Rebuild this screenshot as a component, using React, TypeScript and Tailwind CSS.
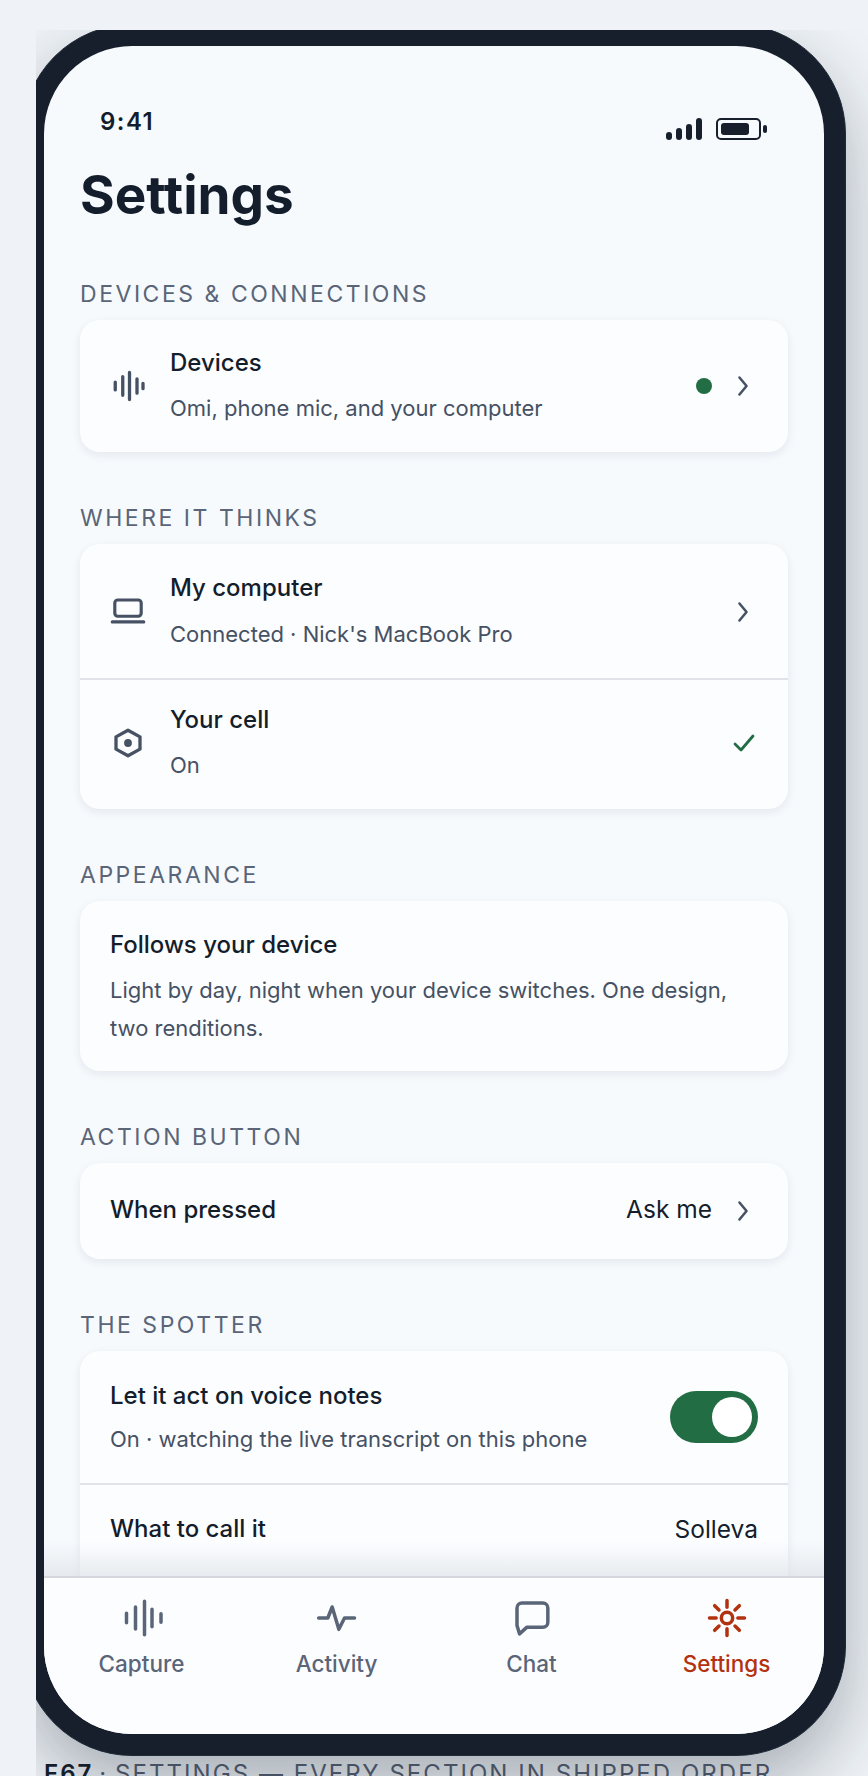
import React from 'react';

const Wave = ({ className }: { className: string }) => (
  <svg viewBox="0 0 24 24" fill="none" stroke="currentColor" strokeWidth="2.2" strokeLinecap="round" className={className}>
    <path d="M3.5 9.4v5.2M8.5 5.8v12.4M13 3v18M18 7.2v9.6M22 10.2v3.6" />
  </svg>
);

const Chevron = () => (
  <svg viewBox="0 0 24 24" fill="none" stroke="#465163" strokeWidth="1.8" strokeLinecap="round" strokeLinejoin="round" className="w-[34px] h-[34px] -mr-[2px] shrink-0">
    <path d="M9.5 6l5 6-5 6" />
  </svg>
);

const Label = ({ children, first }: { children: React.ReactNode; first?: boolean }) => (
  <div className={`${first ? 'mt-[54px]' : 'mt-[53px]'} mb-[13px] text-[23px] leading-[26px] tracking-[0.11em] uppercase text-[#5a6578]`}>
    {children}
  </div>
);

const Card = ({ children }: { children: React.ReactNode }) => (
  <div className="bg-[#fcfdff] rounded-[20px] shadow-[0_3px_10px_rgba(20,30,45,0.08)] overflow-hidden">{children}</div>
);

const IconRow = ({ icon, title, sub, right, tall, short }: { icon: React.ReactNode; title: string; sub: string; right: React.ReactNode; tall?: boolean; short?: boolean }) => (
  <div className={`flex items-center pl-[30px] pr-[30px] ${tall ? 'h-[135px]' : short ? 'h-[129px]' : 'h-[132px]'}`}>
    <div className="w-[36px] h-[36px] mr-[24px] shrink-0 text-[#465163]">{icon}</div>
    <div className={`flex-1 min-w-0 ${short ? 'pb-[5px]' : 'pb-[2px]'}`}>
      <div className="text-[24px] leading-[32px] font-medium text-[#141d2b]">{title}</div>
      <div className={`${tall ? 'mt-[15px]' : 'mt-[14px]'} text-[22px] leading-[30px] text-[#465163]`}>{sub}</div>
    </div>
    {right}
  </div>
);

const tabs = [
  {
    name: 'Capture',
    active: false,
    icon: <path d="M2.7 9.2v5.6M8.1 5.4v13.2M13.5 2v20M18 6.7v10.6M23.4 9.5v5" />,
  },
  { name: 'Activity', active: false, icon: <path d="M1 12h5.5l2.6-6.6 4 13.4 3.4-6.8h6" /> },
  { name: 'Chat', active: false, icon: <path d="M3 6a3 3 0 0 1 3-3h12.5a3 3 0 0 1 3 3v8.5a3 3 0 0 1-3 3H9l-4.5 4-1.5-5z" /> },
  {
    name: 'Settings',
    active: true,
    icon: (
      <>
        <circle cx="12" cy="12" r="3.4" />
        <path d="M12 1.5v4M12 18.5v4M1.5 12h4M18.5 12h4M4.6 4.6l2.6 2.6M16.8 16.8l2.6 2.6M4.6 19.4l2.6-2.6M16.8 7.2l2.6-2.6" />
      </>
    ),
  },
];

export default function App() {
  return (
    <div className="h-[1776px] overflow-hidden bg-[#eff3f7] pt-[30px] pl-[36px] font-['Inter',sans-serif]">
      <div className="w-[832px] h-[1746px] overflow-hidden">
        <div className="-mt-[6px] -ml-[14px] w-[824px] h-[1732px] p-[22px] rounded-[110px] bg-[#161f2b] border border-[#1f2b3a] shadow-[0_30px_70px_rgba(20,30,45,0.32)]">
          <div className="relative w-[780px] h-[1688px] -m-px rounded-[88px] overflow-hidden bg-[#f6fafd] flex flex-col">
            <div className="flex-1 min-h-0 overflow-hidden px-[36px]">
              <div className="flex justify-between items-start pt-[61px] pl-[20px] pr-[21px]">
                <div className="text-[24px] leading-[30px] font-semibold tracking-[0.06em] text-[#141d2b]">9:41</div>
                <div className="flex items-end gap-[14px] mt-[11px]">
                  <div className="flex items-end gap-[4px] h-[22px]">
                    <div className="w-[6px] h-[8px] rounded-full bg-[#161f2b]" />
                    <div className="w-[6px] h-[12px] rounded-full bg-[#161f2b]" />
                    <div className="w-[6px] h-[16px] rounded-full bg-[#161f2b]" />
                    <div className="w-[6px] h-[22px] rounded-full bg-[#161f2b]" />
                  </div>
                  <div className="flex items-center gap-[2px]">
                    <div className="w-[45px] h-[22px] rounded-[5px] border-2 border-[#161f2b] p-[3px] pr-[10px]">
                      <div className="w-full h-full rounded-[3px] bg-[#161f2b]" />
                    </div>
                    <div className="w-[4px] h-[8px] rounded-full bg-[#161f2b]" />
                  </div>
                </div>
              </div>
              <h1 className="mt-[23px] text-[53px] leading-[64px] font-bold text-[#141d2b]">Settings</h1>

              <Label first>Devices &amp; connections</Label>
              <Card>
                <IconRow
                  icon={<Wave className="w-[36px] h-[36px]" />}
                  title="Devices"
                  sub="Omi, phone mic, and your computer"
                  right={
                    <>
                      <div className="w-[16px] h-[16px] rounded-full bg-[#226d44] mr-[14px]" />
                      <Chevron />
                    </>
                  }
                />
              </Card>

              <Label>Where it thinks</Label>
              <Card>
                <IconRow
                  tall
                  icon={
                    <svg viewBox="0 0 24 24" fill="none" stroke="currentColor" strokeWidth="2.1" strokeLinecap="round" strokeLinejoin="round" className="w-[36px] h-[36px]">
                      <rect x="3.2" y="4" width="17.6" height="10.8" rx="2" />
                      <path d="M1.5 18.6h21" />
                    </svg>
                  }
                  title="My computer"
                  sub="Connected · Nick's MacBook Pro"
                  right={<Chevron />}
                />
                <div className="h-[2px] bg-[#e0e3ea] -mt-px" />
                <IconRow
                  short
                  icon={
                    <svg viewBox="0 0 24 24" fill="none" stroke="currentColor" strokeWidth="2.2" strokeLinejoin="round" className="w-[36px] h-[36px] -mt-[2px]">
                      <path d="M12 3.5l8 4.4v8.2l-8 4.4-8-4.4V7.9z" />
                      <circle cx="12" cy="12" r="2.6" fill="currentColor" stroke="none" />
                    </svg>
                  }
                  title="Your cell"
                  sub="On"
                  right={
                    <svg viewBox="0 0 24 24" fill="none" stroke="#226d44" strokeWidth="2.8" strokeLinecap="round" strokeLinejoin="round" className="w-[24px] h-[24px] mr-[2px] -mt-[4px] shrink-0">
                      <path d="M3 13l6 6L21 5" />
                    </svg>
                  }
                />
              </Card>

              <Label>Appearance</Label>
              <Card>
                <div className="px-[30px] pt-[28px] pb-[24px]">
                  <div className="text-[24px] leading-[32px] font-medium text-[#141d2b]">Follows your device</div>
                  <div className="mt-[10px] text-[22px] leading-[38px] text-[#465163]">
                    Light by day, night when your device switches. One design, two renditions.
                  </div>
                </div>
              </Card>

              <Label>Action button</Label>
              <Card>
                <div className="flex items-center pl-[30px] pr-[30px] h-[96px]">
                  <div className="flex-1 text-[24px] font-medium text-[#141d2b] -mt-[3px]">When pressed</div>
                  <div className="text-[24.5px] text-[#141d2b] mr-[14px] -mt-[3px]">Ask me</div>
                  <Chevron />
                </div>
              </Card>

              <Label>The spotter</Label>
              <Card>
                <div className="flex items-center pl-[30px] pr-[30px] h-[132px]">
                  <div className="flex-1 min-w-0">
                    <div className="text-[24px] leading-[32px] font-medium text-[#141d2b]">Let it act on voice notes</div>
                    <div className="mt-[12px] text-[22px] leading-[30px] text-[#465163]">On · watching the live transcript on this phone</div>
                  </div>
                  <div className="w-[88px] h-[52px] rounded-full bg-[#226d44] p-[6px] flex justify-end">
                    <div className="w-[40px] h-[40px] rounded-full bg-white" />
                  </div>
                </div>
                <div className="h-[2px] bg-[#e0e3ea]" />
                <div className="flex items-start justify-between pl-[30px] pr-[30px] pt-[26px] h-[120px]">
                  <div className="text-[24px] font-medium text-[#141d2b]">What to call it</div>
                  <div className="text-[24.5px] text-[#141d2b]">Solleva</div>
                </div>
              </Card>
            </div>

            <div className="absolute left-0 right-0 bottom-[158px] h-[34px] bg-gradient-to-b from-transparent to-[#dfe3e8]/70" />

            <div className="relative shrink-0 h-[158px] border-t-2 border-[#d4d8de] bg-[#fcfdff] grid grid-cols-4 pt-[20px]">
              {tabs.map((tab) => (
                <div key={tab.name} className={`flex flex-col items-center ${tab.active ? 'text-[#b23210]' : 'text-[#5a6578]'}`}>
                  <svg viewBox="0 0 24 24" fill="none" stroke="currentColor" strokeWidth="2.1" strokeLinecap="round" strokeLinejoin="round" className="w-[40px] h-[40px] overflow-visible">
                    {tab.icon}
                  </svg>
                  <div className="mt-[11px] text-[22.5px] leading-[30px] font-medium">{tab.name}</div>
                </div>
              ))}
            </div>
          </div>
        </div>
        <div className="ml-[8px] mt-[3px] text-[24px] leading-[30px] tracking-[0.0855em] uppercase whitespace-nowrap text-[#465163]">
          <span className="font-semibold text-[#141d2b]">F67</span> <span className="-ml-[3px]">·</span> <span className="-ml-[2px]">Settings — every section in shipped order</span>
        </div>
      </div>
    </div>
  );
}
